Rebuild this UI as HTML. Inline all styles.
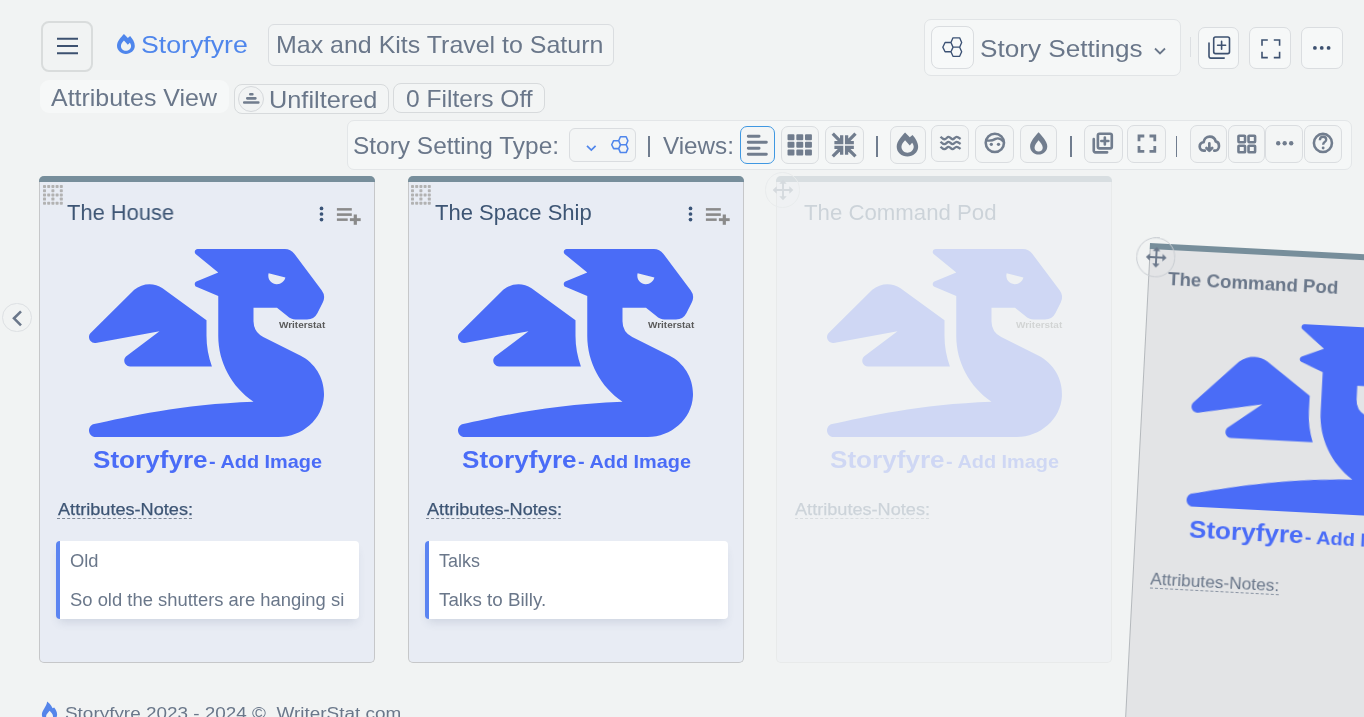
<!DOCTYPE html>
<html lang="en"><head><meta charset="utf-8"><title>Storyfyre - Max and Kits Travel to Saturn</title>
<style>
html,body{margin:0;padding:0;}
body{width:1364px;height:717px;overflow:hidden;position:relative;background:#f1f3f3;font-family:"Liberation Sans",sans-serif;}
.b{position:absolute;display:block;}
button.b{appearance:none;-webkit-appearance:none;padding:0;margin:0;font:inherit;outline:none;}
.t{position:absolute;white-space:pre;line-height:1;transform-origin:0 50%;will-change:transform;}
svg{overflow:visible;}
</style></head><body>
<header>
<div class="b" style="left:41.0px;top:21.0px;width:52.0px;height:50.8px;background:#f1f3f3;border:2px solid #d9dcdc;border-radius:8px;box-sizing:border-box;"></div>
<svg class="b" style="left:55.00px;top:35.40px;" width="26.00" height="22.00" viewBox="0 0 26 22"><path d="M2 3.7H23M2 10.9H23M2 18.3H23" stroke="#3d5170" stroke-width="2" fill="none"/></svg>
<svg class="b" style="left:117.30px;top:33.50px;" width="17.80" height="20.00" viewBox="122 118 366 409"><path fill-rule="evenodd" fill="#4f86ec" d="M265 118 L345 198 L392 160 C440 215 490 290 488 365 C486 460 400 527 305 527 C205 527 122 455 122 360 C122 270 200 190 265 118 Z M265 252 L345 340 L385 295 C402 320 412 340 412 362 C412 420 362 462 305 462 C250 462 203 420 203 362 C203 320 235 285 265 252 Z"/></svg>
<span class="t" style="left:141.07px;top:34px;font-size:23.6px;color:#4f86ec;transform:scaleX(1.1310);">Storyfyre</span>
<button type="button" class="b" style="left:268.0px;top:24.0px;width:345.6px;height:42.0px;background:#f3f5f5;border:1px solid #dadde0;border-radius:6px;box-sizing:border-box;"></button>
<span class="t" style="left:275.95px;top:33px;font-size:23.8px;color:#6a778a;transform:scaleX(1.0488);">Max and Kits Travel to Saturn</span>
<div class="b" style="left:40.0px;top:80.4px;width:189.0px;height:32.6px;background:#f6f8f8;border-radius:9px;"></div>
<span class="t" style="left:51.00px;top:87px;font-size:23.6px;color:#6a778a;transform:scaleX(1.0577);">Attributes View</span>
<button type="button" class="b" style="left:234.3px;top:84.3px;width:154.9px;height:29.3px;background:#f3f5f5;border:1px solid #d7dadc;border-radius:8px;box-sizing:border-box;"></button>
<div class="b" style="left:238.0px;top:86.0px;width:25.8px;height:25.6px;background:#f1f3f3;border:1px solid #d6d9dc;border-radius:13px;box-sizing:border-box;"></div>
<svg class="b" style="left:242.04px;top:92.05px;" width="18.57" height="13.05" viewBox="200 240 370 260"><g fill="#717d8e"><rect x="340" y="262" width="92" height="50" rx="22"/><rect x="280" y="342" width="212" height="51" rx="22"/><rect x="220" y="422" width="330" height="53" rx="22"/></g></svg>
<span class="t" style="left:268.84px;top:88px;font-size:23.8px;color:#6a778a;transform:scaleX(1.0641);">Unfiltered</span>
<button type="button" class="b" style="left:393.3px;top:83.3px;width:151.4px;height:29.7px;background:#f3f5f5;border:1px solid #d7dadc;border-radius:8px;box-sizing:border-box;"></button>
<span class="t" style="left:406.00px;top:87px;font-size:24px;color:#6a778a;transform:scaleX(1.0249);">0 Filters Off</span>
<div class="b" style="left:924.3px;top:19.3px;width:256.3px;height:56.3px;background:#f5f7f7;border:1px solid #e1e4e6;border-radius:7px;box-sizing:border-box;"></div>
<button type="button" class="b" style="left:931.2px;top:26.0px;width:42.6px;height:42.6px;background:#f7f9f9;border:1px solid #dadde0;border-radius:8px;box-sizing:border-box;"></button>
<svg class="b" style="left:942.46px;top:36.92px;" width="20.48" height="20.15" viewBox="216 193 306 301"><path d="M380 205H480L510 275L480 345H380L350 275ZM380 345H480L510 413L480 482H380L350 413ZM262 275H350L382 345L350 413H262L228 345Z" fill="none" stroke="#3b5174" stroke-width="20" stroke-linejoin="round"/></svg>
<span class="t" style="left:979.50px;top:37px;font-size:23.8px;color:#6a778a;transform:scaleX(1.0975);">Story Settings</span>
<svg class="b" style="left:1153.10px;top:45.90px;" width="14.00" height="10.00" viewBox="0 0 14 10"><path d="M2 2.5 L7 7.5 L12 2.5" stroke="#6a778a" stroke-width="1.8" fill="none"/></svg>
<div class="b" style="left:1190.0px;top:37.3px;width:1.4px;height:19.3px;background:#dcdfe2;"></div>
<button type="button" class="b" style="left:1198.2px;top:27.3px;width:41.3px;height:41.3px;background:#f6f8f8;border:1px solid #dadde0;border-radius:7px;box-sizing:border-box;"></button>
<button type="button" class="b" style="left:1249.2px;top:27.3px;width:42.3px;height:41.3px;background:#f6f8f8;border:1px solid #dadde0;border-radius:7px;box-sizing:border-box;"></button>
<button type="button" class="b" style="left:1301.1px;top:27.3px;width:41.6px;height:41.3px;background:#f6f8f8;border:1px solid #dadde0;border-radius:7px;box-sizing:border-box;"></button>
<svg class="b" style="left:1206.80px;top:35.40px;" width="24.50" height="25.10" viewBox="-2 -2 24.5 25.1"><g fill="none" stroke="#3d5170" stroke-width="1.6" stroke-linecap="round" stroke-linejoin="round"><rect x="4.7" y="0" width="15.8" height="16.6" rx="1.8"/><path d="M0 6.1V19.3a1.800 1.800 0 0 0 1.800 1.800H15.200M12.600 4.200V12.200M8.600 8.200H16.600"/></g></svg>
<svg class="b" style="left:1259.80px;top:37.60px;" width="21.60" height="21.60" viewBox="-2 -2 21.600000000000136 21.6"><path d="M0 5.8V0H5.8M11.800000000000136 0H17.600000000000136V5.8M17.600000000000136 11.8V17.6H11.800000000000136M5.8 17.6H0V11.8" fill="none" stroke="#3d5170" stroke-width="1.6"/></svg>
<svg class="b" style="left:1312.45px;top:45.40px;" width="19.50" height="5.80" viewBox="-9.75 -2.9 19.5 5.8"><circle cx="-6.85" cy="0" r="1.9" fill="#3d5170"/><circle cx="0" cy="0" r="1.9" fill="#3d5170"/><circle cx="6.85" cy="0" r="1.9" fill="#3d5170"/></svg>
</header>
<nav aria-label="Story setting toolbar">
<div class="b" style="left:346.5px;top:120.0px;width:1005.1px;height:49.5px;background:#f5f7f7;border:1px solid #e3e6e8;border-radius:7px;box-sizing:border-box;"></div>
<span class="t" style="left:352.87px;top:135px;font-size:23.7px;color:#6a778a;transform:scaleX(1.0317);">Story Setting Type:</span>
<button type="button" class="b" style="left:569.3px;top:128.2px;width:66.3px;height:33.7px;background:#f3f5f5;border:1px solid #dadde0;border-radius:6px;box-sizing:border-box;"></button>
<svg class="b" style="left:585.00px;top:142.60px;" width="13.00" height="10.00" viewBox="0 0 13 10"><path d="M2 2.8 L6.3 7.1 L10.600 2.800" stroke="#4f86ec" stroke-width="1.700" fill="none"/></svg>
<svg class="b" style="left:610.81px;top:135.71px;" width="17.58" height="17.29" viewBox="216 193 306 301"><path d="M380 205H480L510 275L480 345H380L350 275ZM380 345H480L510 413L480 482H380L350 413ZM262 275H350L382 345L350 413H262L228 345Z" fill="none" stroke="#4f86ec" stroke-width="27" stroke-linejoin="round"/></svg>
<div class="b" style="left:647.6px;top:136.0px;width:2.4px;height:21.0px;background:#707d8f;"></div>
<span class="t" style="left:662.80px;top:134px;font-size:23.9px;color:#6a778a;transform:scaleX(1.0147);">Views:</span>
<button type="button" class="b" style="left:740.1px;top:126.1px;width:34.6px;height:37.5px;background:#f3f5f5;border:1.5px solid #3f98e2;border-radius:7px;box-sizing:border-box;"></button>
<svg class="b" style="left:745.38px;top:132.56px;" width="24.63" height="24.63" viewBox="80 90 210 210"><path d="M108 118H200M108 169H262M108 220H200M108 271H262" stroke="#717d8e" stroke-width="25" stroke-linecap="round" fill="none"/></svg>
<button type="button" class="b" style="left:781.2px;top:126.1px;width:38.3px;height:37.5px;background:#f3f5f5;border:1px solid #dadde0;border-radius:7px;box-sizing:border-box;"></button>
<svg class="b" style="left:786.44px;top:133.14px;" width="26.98" height="23.46" viewBox="430 95 230 200"><g fill="#717d8e"><rect x="443" y="105" width="59" height="51" rx="8"/><rect x="443" y="170" width="59" height="51" rx="8"/><rect x="443" y="236" width="59" height="51" rx="8"/><rect x="518" y="105" width="59" height="51" rx="8"/><rect x="518" y="170" width="59" height="51" rx="8"/><rect x="518" y="236" width="59" height="51" rx="8"/><rect x="592" y="105" width="59" height="51" rx="8"/><rect x="592" y="170" width="59" height="51" rx="8"/><rect x="592" y="236" width="59" height="51" rx="8"/></g></svg>
<button type="button" class="b" style="left:825.2px;top:126.1px;width:38.4px;height:37.5px;background:#f3f5f5;border:1px solid #dadde0;border-radius:7px;box-sizing:border-box;"></button>
<svg class="b" style="left:831.01px;top:131.97px;" width="26.39" height="26.16" viewBox="810 85 225 223"><path d="M825 99L901 175M839 175H901V113M825 293L901 217M839 217H901V279M1019 99L943 175M1005 175H943V113M1019 293L943 217M1005 217H943V279" stroke="#717d8e" stroke-width="28" fill="none"/></svg>
<div class="b" style="left:875.9px;top:136.2px;width:1.9px;height:20.6px;background:#707d8f;"></div>
<button type="button" class="b" style="left:890.4px;top:126.2px;width:35.2px;height:37.4px;background:#f3f5f5;border:1px solid #dadde0;border-radius:7px;box-sizing:border-box;"></button>
<svg class="b" style="left:896.45px;top:132.45px;" width="22.87" height="25.22" viewBox="110 110 390 430"><path fill-rule="evenodd" fill="#717d8e" d="M265 118 L345 198 L392 160 C440 215 490 290 488 365 C486 460 400 527 305 527 C205 527 122 455 122 360 C122 270 200 190 265 118 Z M265 252 L345 340 L385 295 C402 320 412 340 412 362 C412 420 362 462 305 462 C250 462 203 420 203 362 C203 320 235 285 265 252 Z"/></svg>
<button type="button" class="b" style="left:931.3px;top:124.9px;width:38.2px;height:37.6px;background:#f3f5f5;border:1px solid #dadde0;border-radius:7px;box-sizing:border-box;"></button>
<svg class="b" style="left:939.27px;top:135.38px;" width="22.87" height="16.42" viewBox="840 160 390 280"><path d="M866 190 C 890 215 910 232 932 232 C 966 232 975 192 1003 192 C 1035 192 1045 232 1070 232 C 1100 232 1110 192 1140 192 C 1165 192 1185 210 1208 228M866 275 C 890 300 910 317 932 317 C 966 317 975 277 1003 277 C 1035 277 1045 317 1070 317 C 1100 317 1110 277 1140 277 C 1165 277 1185 295 1208 313M866 360 C 890 385 910 402 932 402 C 966 402 975 362 1003 362 C 1035 362 1045 402 1070 402 C 1100 402 1110 362 1140 362 C 1165 362 1185 380 1208 398" stroke="#717d8e" stroke-width="40" fill="none"/></svg>
<button type="button" class="b" style="left:975.4px;top:125.0px;width:38.3px;height:37.5px;background:#f3f5f5;border:1px solid #dadde0;border-radius:7px;box-sizing:border-box;"></button>
<svg class="b" style="left:982.83px;top:131.07px;" width="23.96" height="23.96" viewBox="140 120 380 380"><circle cx="328" cy="308" r="145" fill="none" stroke="#717d8e" stroke-width="41"/><circle cx="272" cy="332" r="26" fill="#717d8e"/><circle cx="386" cy="332" r="26" fill="#717d8e"/><path d="M196 268 C 260 280 310 262 340 245 C 385 222 430 250 468 292" fill="none" stroke="#717d8e" stroke-width="37"/></svg>
<button type="button" class="b" style="left:1020.2px;top:125.0px;width:36.5px;height:37.5px;background:#f3f5f5;border:1px solid #dadde0;border-radius:7px;box-sizing:border-box;"></button>
<svg class="b" style="left:1028.85px;top:131.07px;" width="19.55" height="24.59" viewBox="870 120 310 390"><path fill-rule="evenodd" fill="#717d8e" d="M1022 138 C 1080 200 1160 290 1160 360 C 1160 440 1095 492 1023 492 C 950 492 887 440 887 360 C 887 290 965 200 1022 138 Z M1022 268 C 1050 300 1088 350 1088 385 C 1088 420 1060 447 1023 447 C 985 447 958 420 958 385 C 958 350 995 300 1022 268 Z"/></svg>
<div class="b" style="left:1069.8px;top:136.0px;width:1.9px;height:21.0px;background:#707d8f;"></div>
<button type="button" class="b" style="left:1084.2px;top:125.1px;width:38.6px;height:38.0px;background:#f3f5f5;border:1px solid #dadde0;border-radius:7px;box-sizing:border-box;"></button>
<svg class="b" style="left:1092.10px;top:132.40px;" width="21.56" height="22.09" viewBox="-2 -2 24.5 25.1"><g fill="none" stroke="#717d8e" stroke-width="3.0" stroke-linecap="round" stroke-linejoin="round"><rect x="4.7" y="0" width="15.8" height="16.6" rx="1.8"/><path d="M0 6.1V19.3a1.800 1.800 0 0 0 1.800 1.800H15.200M12.600 4.200V12.200M8.600 8.200H16.600"/></g></svg>
<button type="button" class="b" style="left:1127.3px;top:125.1px;width:38.4px;height:38.0px;background:#f3f5f5;border:1px solid #dadde0;border-radius:7px;box-sizing:border-box;"></button>
<svg class="b" style="left:1136.90px;top:133.70px;" width="19.80" height="19.40" viewBox="-2 -2 19.799999999999955 19.400000000000006"><path d="M0 5.3V0H5.3M10.499999999999954 0H15.799999999999955V5.3M15.799999999999955 10.100000000000005V15.400000000000006H10.499999999999954M5.3 15.400000000000006H0V10.100000000000005" fill="none" stroke="#717d8e" stroke-width="2.8"/></svg>
<div class="b" style="left:1175.5px;top:136.0px;width:1.9px;height:21.0px;background:#707d8f;"></div>
<button type="button" class="b" style="left:1190.3px;top:125.1px;width:37.2px;height:38.0px;background:#f3f5f5;border:1px solid #dadde0;border-radius:7px;box-sizing:border-box;"></button>
<svg class="b" style="left:1196.10px;top:132.73px;" width="26.69" height="21.76" viewBox="585 62 130 106"><g fill="none" stroke="#717d8e" stroke-width="13" stroke-linecap="round" stroke-linejoin="round"><path d="M628 148 H622 C 608 148 603 136 603 128 C 603 116 612 108 622 107 C 624 92 636 80 652 80 C 667 80 678 90 681 103 C 692 105 697 115 697 125 C 697 138 688 148 678 148 H674"/><path d="M650 112 V148 M636 135 L650 149 L664 135" /></g></svg>
<button type="button" class="b" style="left:1227.5px;top:125.1px;width:37.4px;height:38.0px;background:#f3f5f5;border:1px solid #dadde0;border-radius:7px;box-sizing:border-box;"></button>
<svg class="b" style="left:1236.13px;top:132.73px;" width="22.58" height="22.17" viewBox="780 62 110 108"><g fill="none" stroke="#717d8e" stroke-width="12.5"><rect x="792" y="75" width="32" height="32" rx="3"/><rect x="792" y="124" width="32" height="32" rx="3"/><rect x="841" y="75" width="32" height="32" rx="3"/><rect x="841" y="124" width="32" height="32" rx="3"/></g></svg>
<button type="button" class="b" style="left:1264.9px;top:125.1px;width:38.6px;height:38.0px;background:#f3f5f5;border:1px solid #dadde0;border-radius:7px;box-sizing:border-box;"></button>
<svg class="b" style="left:1275.10px;top:140.40px;" width="19.40" height="6.40" viewBox="-9.7 -3.2 19.4 6.4"><circle cx="-6.5" cy="0" r="2.2" fill="#717d8e"/><circle cx="0" cy="0" r="2.2" fill="#717d8e"/><circle cx="6.5" cy="0" r="2.2" fill="#717d8e"/></svg>
<button type="button" class="b" style="left:1303.5px;top:125.1px;width:38.4px;height:38.0px;background:#f3f5f5;border:1px solid #dadde0;border-radius:7px;box-sizing:border-box;"></button>
<svg class="b" style="left:1310.04px;top:130.26px;" width="25.87" height="25.87" viewBox="1140 50 126 126"><circle cx="1203" cy="113" r="44" fill="none" stroke="#717d8e" stroke-width="12.5"/><path d="M1188 100 C 1188 88 1196 83 1204 83 C 1213 83 1219 89 1219 97 C 1219 108 1204 109 1204 122" fill="none" stroke="#717d8e" stroke-width="11.5"/><circle cx="1204" cy="138" r="7" fill="#717d8e"/></svg>
</nav>
<main>
<div class="b" style="left:2.3px;top:302.8px;width:29.5px;height:29.4px;background:#f1f3f3;border:1px solid #dde0e3;border-radius:15px;box-sizing:border-box;"></div>
<svg class="b" style="left:9.00px;top:307.00px;" width="16.00" height="22.00" viewBox="9 307 16 22"><path d="M21 311.300 L14 318.300 L21 325.300" fill="none" stroke="#6a778a" stroke-width="2.600"/></svg>
<section class="b" style="left:39.0px;top:176.0px;width:336px;height:487px;"><div class="b" style="left:0.0px;top:0.0px;width:336.0px;height:487.0px;background:#e8ecf4;border:1px solid #c6c7c9;border-radius:5px;box-sizing:border-box;border-top:none;"></div><div class="b" style="left:0.0px;top:0.0px;width:336.0px;height:6.0px;background:#778e9b;border-radius:5px 5px 0 0;"></div><svg class="b" style="left:3.50px;top:9.00px;" width="20.00" height="20.00" viewBox="0 0 20 20"><g fill="#b2b2b2"><rect x="0.0" y="0.0" width="3.000" height="3.000" rx="0.700"/><rect x="4.2" y="0.0" width="3.000" height="3.000" rx="0.700"/><rect x="8.4" y="0.0" width="3.000" height="3.000" rx="0.700"/><rect x="12.6" y="0.0" width="3.000" height="3.000" rx="0.700"/><rect x="16.8" y="0.0" width="3.000" height="3.000" rx="0.700"/><rect x="0.0" y="4.2" width="3.000" height="3.000" rx="0.700"/><rect x="8.4" y="4.2" width="3.000" height="3.000" rx="0.700"/><rect x="16.8" y="4.2" width="3.000" height="3.000" rx="0.700"/><rect x="0.0" y="8.4" width="3.000" height="3.000" rx="0.700"/><rect x="4.2" y="8.4" width="3.000" height="3.000" rx="0.700"/><rect x="8.4" y="8.4" width="3.000" height="3.000" rx="0.700"/><rect x="12.6" y="8.4" width="3.000" height="3.000" rx="0.700"/><rect x="16.8" y="8.4" width="3.000" height="3.000" rx="0.700"/><rect x="0.0" y="12.6" width="3.000" height="3.000" rx="0.700"/><rect x="8.4" y="12.6" width="3.000" height="3.000" rx="0.700"/><rect x="16.8" y="12.6" width="3.000" height="3.000" rx="0.700"/><rect x="0.0" y="16.8" width="3.000" height="3.000" rx="0.700"/><rect x="4.2" y="16.8" width="3.000" height="3.000" rx="0.700"/><rect x="8.4" y="16.8" width="3.000" height="3.000" rx="0.700"/><rect x="12.6" y="16.8" width="3.000" height="3.000" rx="0.700"/><rect x="16.8" y="16.8" width="3.000" height="3.000" rx="0.700"/></g></svg><span class="t" style="left:27.90px;top:26px;font-size:22px;color:#3d5574;transform:scaleX(0.9937);">The House</span><svg class="b" style="left:279.00px;top:28.00px;" width="7.00" height="20.00" viewBox="-3.500 -10 7 20"><circle cx="0" cy="-5.600" r="1.850" fill="#3a5478"/><circle cx="0" cy="0" r="1.850" fill="#3a5478"/><circle cx="0" cy="5.600" r="1.850" fill="#3a5478"/></svg><svg class="b" style="left:297.00px;top:31.00px;" width="26.00" height="19.00" viewBox="0 0 26 19"><g fill="#8a8a8a"><rect x="0.900" y="1.100" width="14.900" height="2.500"/><rect x="0.900" y="6.300" width="14.900" height="2.600"/><rect x="0.900" y="11.400" width="10.800" height="2.500"/><rect x="13.900" y="11.200" width="10.800" height="2.900"/><rect x="17.700" y="7.500" width="3.200" height="10.300"/></g></svg><svg class="b" style="left:50.40px;top:73.20px;" width="235.00" height="188.00" viewBox="0 0 640 512"><path fill="#4a6cf7" d="M18.32 255.78L192 223.96l-91.28 68.69c-10.08 10.08-2.94 27.31 11.31 27.31h222.7c-9.44-26.4-14.73-54.47-14.73-83.38v-42.27l-119.73-87.6c-23.82-15.88-55.29-14.01-77.06 4.59L5.81 227.64c-12.38 10.33-3.45 30.42 12.51 28.14zm556.87 34.1l-100.66-50.31A47.992 47.992 0 0 1 448 196.65v-36.69h64l28.09 22.63c6 6 14.14 9.37 22.63 9.37h30.97a32 32 0 0 0 28.62-17.69l14.31-28.62a32.005 32.005 0 0 0-3.02-33.51l-74.53-99.38C553.02 4.7 543.54 0 533.47 0H296.02c-7.13 0-10.7 8.57-5.66 13.61L352 63.96 292.42 88.8c-5.9 2.95-5.9 11.36 0 14.31L352 127.96v108.62c0 72.08 36.03 139.39 96 179.38-195.59 6.81-344.56 41.01-434.1 60.91C5.78 478.67 0 485.88 0 494.2 0 504 7.95 512 17.76 512h499.08c63.29.01 119.61-47.56 122.99-110.76 2.52-47.28-22.73-90.4-64.64-111.36zM489.18 66.25l45.65 11.41c-2.75 10.91-12.47 18.89-24.13 18.26-12.96-.71-25.85-12.53-21.52-29.67z"/></svg><span class="t" style="left:239.90px;top:145px;font-size:9px;color:#5a5a5a;font-weight:700;transform:scaleX(1.1040);">Writerstat</span><span class="t" style="left:54.00px;top:272px;font-size:24.3px;color:#4a6cf7;font-weight:700;transform:scaleX(1.0738);">Storyfyre</span><span class="t" style="left:169.60px;top:276px;font-size:19px;color:#4a6cf7;font-weight:700;transform:scaleX(1.0466);">- Add Image</span><span class="t" style="left:18.60px;top:326px;font-size:16.8px;color:#3d5574;transform:scaleX(1.0803);-webkit-text-stroke:0.25px #3d5574;">Attributes-Notes:</span><div class="b" style="left:18.4px;top:342.2px;width:134.5px;height:1.0px;border-top:1px dashed #7d8796;height:0;"></div><div class="b" style="left:16.8px;top:365.0px;width:303.1px;height:78.1px;background:#fff;border-radius:4px;border-left:4px solid #5b84f1;box-sizing:border-box;box-shadow:0 6px 10px -3px rgba(60,80,120,0.16);"></div><span class="t" style="left:31.00px;top:377px;font-size:17.6px;color:#6a778a;transform:scaleX(1.0416);">Old</span><span class="t" style="left:31.00px;top:416px;font-size:17.6px;color:#6a778a;transform:scaleX(1.0463);">So old the shutters are hanging si</span></section>
<section class="b" style="left:408.0px;top:176.0px;width:336px;height:487px;"><div class="b" style="left:0.0px;top:0.0px;width:336.0px;height:487.0px;background:#e8ecf4;border:1px solid #c6c7c9;border-radius:5px;box-sizing:border-box;border-top:none;"></div><div class="b" style="left:0.0px;top:0.0px;width:336.0px;height:6.0px;background:#778e9b;border-radius:5px 5px 0 0;"></div><svg class="b" style="left:2.50px;top:9.00px;" width="20.00" height="20.00" viewBox="0 0 20 20"><g fill="#b2b2b2"><rect x="0.0" y="0.0" width="3.000" height="3.000" rx="0.700"/><rect x="4.2" y="0.0" width="3.000" height="3.000" rx="0.700"/><rect x="8.4" y="0.0" width="3.000" height="3.000" rx="0.700"/><rect x="12.6" y="0.0" width="3.000" height="3.000" rx="0.700"/><rect x="16.8" y="0.0" width="3.000" height="3.000" rx="0.700"/><rect x="0.0" y="4.2" width="3.000" height="3.000" rx="0.700"/><rect x="8.4" y="4.2" width="3.000" height="3.000" rx="0.700"/><rect x="16.8" y="4.2" width="3.000" height="3.000" rx="0.700"/><rect x="0.0" y="8.4" width="3.000" height="3.000" rx="0.700"/><rect x="4.2" y="8.4" width="3.000" height="3.000" rx="0.700"/><rect x="8.4" y="8.4" width="3.000" height="3.000" rx="0.700"/><rect x="12.6" y="8.4" width="3.000" height="3.000" rx="0.700"/><rect x="16.8" y="8.4" width="3.000" height="3.000" rx="0.700"/><rect x="0.0" y="12.6" width="3.000" height="3.000" rx="0.700"/><rect x="8.4" y="12.6" width="3.000" height="3.000" rx="0.700"/><rect x="16.8" y="12.6" width="3.000" height="3.000" rx="0.700"/><rect x="0.0" y="16.8" width="3.000" height="3.000" rx="0.700"/><rect x="4.2" y="16.8" width="3.000" height="3.000" rx="0.700"/><rect x="8.4" y="16.8" width="3.000" height="3.000" rx="0.700"/><rect x="12.6" y="16.8" width="3.000" height="3.000" rx="0.700"/><rect x="16.8" y="16.8" width="3.000" height="3.000" rx="0.700"/></g></svg><span class="t" style="left:26.90px;top:26px;font-size:22px;color:#3d5574;transform:scaleX(1.0012);">The Space Ship</span><svg class="b" style="left:279.00px;top:28.00px;" width="7.00" height="20.00" viewBox="-3.500 -10 7 20"><circle cx="0" cy="-5.600" r="1.850" fill="#3a5478"/><circle cx="0" cy="0" r="1.850" fill="#3a5478"/><circle cx="0" cy="5.600" r="1.850" fill="#3a5478"/></svg><svg class="b" style="left:297.00px;top:31.00px;" width="26.00" height="19.00" viewBox="0 0 26 19"><g fill="#8a8a8a"><rect x="0.900" y="1.100" width="14.900" height="2.500"/><rect x="0.900" y="6.300" width="14.900" height="2.600"/><rect x="0.900" y="11.400" width="10.800" height="2.500"/><rect x="13.900" y="11.200" width="10.800" height="2.900"/><rect x="17.700" y="7.500" width="3.200" height="10.300"/></g></svg><svg class="b" style="left:50.40px;top:73.20px;" width="235.00" height="188.00" viewBox="0 0 640 512"><path fill="#4a6cf7" d="M18.32 255.78L192 223.96l-91.28 68.69c-10.08 10.08-2.94 27.31 11.31 27.31h222.7c-9.44-26.4-14.73-54.47-14.73-83.38v-42.27l-119.73-87.6c-23.82-15.88-55.29-14.01-77.06 4.59L5.81 227.64c-12.38 10.33-3.45 30.42 12.51 28.14zm556.87 34.1l-100.66-50.31A47.992 47.992 0 0 1 448 196.65v-36.69h64l28.09 22.63c6 6 14.14 9.37 22.63 9.37h30.97a32 32 0 0 0 28.62-17.69l14.31-28.62a32.005 32.005 0 0 0-3.02-33.51l-74.53-99.38C553.02 4.7 543.54 0 533.47 0H296.02c-7.13 0-10.7 8.57-5.66 13.61L352 63.96 292.42 88.8c-5.9 2.95-5.9 11.36 0 14.31L352 127.96v108.62c0 72.08 36.03 139.39 96 179.38-195.59 6.81-344.56 41.01-434.1 60.91C5.78 478.67 0 485.88 0 494.2 0 504 7.95 512 17.76 512h499.08c63.29.01 119.61-47.56 122.99-110.76 2.52-47.28-22.73-90.4-64.64-111.36zM489.18 66.25l45.65 11.41c-2.75 10.91-12.47 18.89-24.13 18.26-12.96-.71-25.85-12.53-21.52-29.67z"/></svg><span class="t" style="left:239.90px;top:145px;font-size:9px;color:#5a5a5a;font-weight:700;transform:scaleX(1.1040);">Writerstat</span><span class="t" style="left:54.00px;top:272px;font-size:24.3px;color:#4a6cf7;font-weight:700;transform:scaleX(1.0738);">Storyfyre</span><span class="t" style="left:169.60px;top:276px;font-size:19px;color:#4a6cf7;font-weight:700;transform:scaleX(1.0466);">- Add Image</span><span class="t" style="left:18.60px;top:326px;font-size:16.8px;color:#3d5574;transform:scaleX(1.0803);-webkit-text-stroke:0.25px #3d5574;">Attributes-Notes:</span><div class="b" style="left:18.4px;top:342.2px;width:134.5px;height:1.0px;border-top:1px dashed #7d8796;height:0;"></div><div class="b" style="left:16.8px;top:365.0px;width:303.1px;height:78.1px;background:#fff;border-radius:4px;border-left:4px solid #5b84f1;box-sizing:border-box;box-shadow:0 6px 10px -3px rgba(60,80,120,0.16);"></div><span class="t" style="left:31.00px;top:377px;font-size:17.6px;color:#6a778a;transform:scaleX(1.0202);">Talks</span><span class="t" style="left:31.00px;top:416px;font-size:17.6px;color:#6a778a;transform:scaleX(1.0675);">Talks to Billy.</span></section>
<section class="b" style="left:776.4px;top:176.0px;width:336px;height:487px;opacity:0.2;"><div class="b" style="left:0.0px;top:0.0px;width:336.0px;height:487.0px;background:#e8ecf4;border:1px solid #c6c7c9;border-radius:5px;box-sizing:border-box;border-top:none;"></div><div class="b" style="left:0.0px;top:0.0px;width:336.0px;height:6.0px;background:#778e9b;border-radius:5px 5px 0 0;"></div><div class="b" style="left:-11.5px;top:-3.6px;width:35.2px;height:35.2px;border:1px solid #c9cdd2;border-radius:20px;box-sizing:border-box;"></div><svg class="b" style="left:-4.90px;top:3.00px;" width="22.00" height="22.00" viewBox="-11 -11 22 22"><path d="M0 -10.300 L3.700 -6.300 H0.950 V-0.950 H6.300 V-3.700 L10.300 0 L6.300 3.700 V0.950 H0.950 V6.300 H3.700 L0 10.300 L-3.700 6.300 H-0.950 V0.950 H-6.300 V3.700 L-10.300 0 L-6.300 -3.700 V-0.950 H-0.950 V-6.300 H-3.700 Z" fill="#6a778a"/></svg><span class="t" style="left:27.30px;top:26px;font-size:22px;color:#3d5574;transform:scaleX(1.0094);">The Command Pod</span><svg class="b" style="left:50.40px;top:73.20px;" width="235.00" height="188.00" viewBox="0 0 640 512"><path fill="#4a6cf7" d="M18.32 255.78L192 223.96l-91.28 68.69c-10.08 10.08-2.94 27.31 11.31 27.31h222.7c-9.44-26.4-14.73-54.47-14.73-83.38v-42.27l-119.73-87.6c-23.82-15.88-55.29-14.01-77.06 4.59L5.81 227.64c-12.38 10.33-3.45 30.42 12.51 28.14zm556.87 34.1l-100.66-50.31A47.992 47.992 0 0 1 448 196.65v-36.69h64l28.09 22.63c6 6 14.14 9.37 22.63 9.37h30.97a32 32 0 0 0 28.62-17.69l14.31-28.62a32.005 32.005 0 0 0-3.02-33.51l-74.53-99.38C553.02 4.7 543.54 0 533.47 0H296.02c-7.13 0-10.7 8.57-5.66 13.61L352 63.96 292.42 88.8c-5.9 2.95-5.9 11.36 0 14.31L352 127.96v108.62c0 72.08 36.03 139.39 96 179.38-195.59 6.81-344.56 41.01-434.1 60.91C5.78 478.67 0 485.88 0 494.2 0 504 7.95 512 17.76 512h499.08c63.29.01 119.61-47.56 122.99-110.76 2.52-47.28-22.73-90.4-64.64-111.36zM489.18 66.25l45.65 11.41c-2.75 10.91-12.47 18.89-24.13 18.26-12.96-.71-25.85-12.53-21.52-29.67z"/></svg><span class="t" style="left:239.90px;top:145px;font-size:9px;color:#5a5a5a;font-weight:700;transform:scaleX(1.1040);">Writerstat</span><span class="t" style="left:54.00px;top:272px;font-size:24.3px;color:#4a6cf7;font-weight:700;transform:scaleX(1.0738);">Storyfyre</span><span class="t" style="left:169.60px;top:276px;font-size:19px;color:#4a6cf7;font-weight:700;transform:scaleX(1.0466);">- Add Image</span><span class="t" style="left:18.60px;top:326px;font-size:16.8px;color:#3d5574;transform:scaleX(1.0803);-webkit-text-stroke:0.25px #3d5574;">Attributes-Notes:</span><div class="b" style="left:18.4px;top:342.2px;width:134.5px;height:1.0px;border-top:1px dashed #7d8796;height:0;"></div></section>
<section class="b" style="left:1150.4px;top:243.2px;width:336px;height:487px;transform:rotate(3deg);transform-origin:0 0;"><div class="b" style="left:0.0px;top:0.0px;width:336.0px;height:487.0px;background:#e3e4e6;border:1px solid #b4b8bc;box-sizing:border-box;border-top:none;"></div><div class="b" style="left:0.0px;top:0.0px;width:336.0px;height:6.0px;background:#778e9b;border-radius:0px 0px 0 0;"></div><div class="b" style="left:-13.3px;top:-6.0px;width:39.6px;height:39.6px;border:1px solid #c9cdd2;border-radius:20px;box-sizing:border-box;"></div><svg class="b" style="left:-4.50px;top:2.80px;" width="22.00" height="22.00" viewBox="-11 -11 22 22"><path d="M0 -10.300 L3.700 -6.300 H0.950 V-0.950 H6.300 V-3.700 L10.300 0 L6.300 3.700 V0.950 H0.950 V6.300 H3.700 L0 10.300 L-3.700 6.300 H-0.950 V0.950 H-6.300 V3.700 L-10.300 0 L-6.300 -3.700 V-0.950 H-0.950 V-6.300 H-3.700 Z" fill="#6a778a"/></svg><span class="t" style="left:20.00px;top:26px;font-size:18.7px;color:#6a778a;font-weight:700;transform:scaleX(1.0009);">The Command Pod</span><svg class="b" style="left:50.40px;top:73.20px;" width="235.00" height="188.00" viewBox="0 0 640 512"><path fill="#4a6cf7" d="M18.32 255.78L192 223.96l-91.28 68.69c-10.08 10.08-2.94 27.31 11.31 27.31h222.7c-9.44-26.4-14.73-54.47-14.73-83.38v-42.27l-119.73-87.6c-23.82-15.88-55.29-14.01-77.06 4.59L5.81 227.64c-12.38 10.33-3.45 30.42 12.51 28.14zm556.87 34.1l-100.66-50.31A47.992 47.992 0 0 1 448 196.65v-36.69h64l28.09 22.63c6 6 14.14 9.37 22.63 9.37h30.97a32 32 0 0 0 28.62-17.69l14.31-28.62a32.005 32.005 0 0 0-3.02-33.51l-74.53-99.38C553.02 4.7 543.54 0 533.47 0H296.02c-7.13 0-10.7 8.57-5.66 13.61L352 63.96 292.42 88.8c-5.9 2.95-5.9 11.36 0 14.31L352 127.96v108.62c0 72.08 36.03 139.39 96 179.38-195.59 6.81-344.56 41.01-434.1 60.91C5.78 478.67 0 485.88 0 494.2 0 504 7.95 512 17.76 512h499.08c63.29.01 119.61-47.56 122.99-110.76 2.52-47.28-22.73-90.4-64.64-111.36zM489.18 66.25l45.65 11.41c-2.75 10.91-12.47 18.89-24.13 18.26-12.96-.71-25.85-12.53-21.52-29.67z"/></svg><span class="t" style="left:239.90px;top:145px;font-size:9px;color:#5a5a5a;font-weight:700;transform:scaleX(1.1040);">Writerstat</span><span class="t" style="left:54.00px;top:272px;font-size:24.3px;color:#4a6cf7;font-weight:700;transform:scaleX(1.0738);">Storyfyre</span><span class="t" style="left:169.60px;top:276px;font-size:19px;color:#4a6cf7;font-weight:700;transform:scaleX(1.0466);">- Add Image</span><span class="t" style="left:18.00px;top:327px;font-size:16.5px;color:#6a778a;transform:scaleX(1.0499);">Attributes-Notes:</span><div class="b" style="left:18.0px;top:343.6px;width:128.5px;height:1.0px;border-top:1px dashed #8a94a3;height:0;"></div></section>
</main>
<footer>
<svg class="b" style="left:41.04px;top:701.21px;" width="17.01" height="20.53" viewBox="120 140 290 350"><path fill-rule="evenodd" fill="#5585ea" d="M225 150 C 245 165 290 200 318 265 L 345 250 C 370 285 395 320 395 370 C 395 440 340 480 265 480 C 190 480 135 440 135 370 C 135 300 215 240 225 150 Z M268 305 C 290 330 325 365 325 400 C 325 435 300 455 268 455 C 235 455 207 435 207 400 C 207 365 245 335 268 305 Z"/></svg>
<span class="t" style="left:65.20px;top:705px;font-size:17.3px;color:#6a778a;transform:scaleX(1.0942);">Storyfyre 2023 - 2024 ©  WriterStat.com</span>
</footer>
</body></html>
